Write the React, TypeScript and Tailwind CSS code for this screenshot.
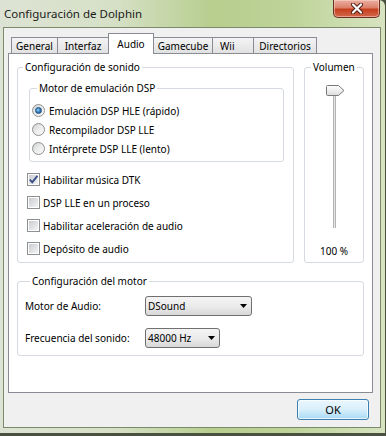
import type { ReactNode } from "react";

const tabs = [
  { label: "General", w: "w-[47px]", active: false },
  { label: "Interfaz", w: "w-[52px]", active: false },
  { label: "Audio", w: "w-[46px]", active: true },
  { label: "Gamecube", w: "w-[60px]", active: false },
  { label: "Wii", w: "w-[42px]", active: false },
  { label: "Directorios", w: "w-[64px]", active: false },
];

function GroupBox({
  label,
  className = "",
  legendClass = "ml-[5px]",
  children,
}: {
  label: string;
  className?: string;
  legendClass?: string;
  children: ReactNode;
}) {
  return (
    <fieldset className={`rounded-[3px] border border-[#d5dae0] ${className}`}>
      <legend className={`px-[2px] leading-[14px] ${legendClass}`}>{label}</legend>
      {children}
    </fieldset>
  );
}

function Radio({ checked }: { checked?: boolean }) {
  return (
    <span className="flex h-[13px] w-[13px] shrink-0 items-center justify-center rounded-full border border-[#8e8f8f] bg-gradient-to-br from-[#d0d2d4] via-[#ececec] to-[#fbfbfb]">
      {checked && (
        <span className="h-[7px] w-[7px] rounded-full border border-[#1f4f85] bg-[radial-gradient(circle_at_40%_40%,#9fd8f7_0%,#3a85c4_45%,#123f73_100%)]" />
      )}
    </span>
  );
}

function Checkbox({ checked }: { checked?: boolean }) {
  return (
    <span className="flex h-[13px] w-[13px] shrink-0 items-center justify-center border border-[#8e8f8f] bg-white">
      <span className="relative flex h-[9px] w-[9px] items-center justify-center bg-gradient-to-br from-[#c9ccd1] to-[#f4f4f4]">
        {checked && (
          <svg width="11" height="11" viewBox="0 0 11 11" className="absolute">
            <path d="M1.8 5.6 L4.3 8.2 L9.4 1.8" fill="none" stroke="#3c5287" strokeWidth="1.9" />
          </svg>
        )}
      </span>
    </span>
  );
}

function Select({ value, width }: { value: string; width: string }) {
  return (
    <div
      className={`flex h-[20px] ${width} items-center justify-between rounded-[3px] border border-[#707070] bg-gradient-to-b from-[#f4f4f4] via-[#ebebeb] to-[#d8d8d8] pl-[2px] pr-[4px]`}
    >
      <span className="leading-[14px]">{value}</span>
      <svg width="7" height="4" viewBox="0 0 7 4">
        <path d="M0 0 H7 L3.5 4 Z" fill="#000" />
      </svg>
    </div>
  );
}

export default function App() {
  return (
    <div className="h-[436px] w-[386px] overflow-hidden bg-[#4a5140] font-['Noto_Sans','Open_Sans',sans-serif] text-[10px] leading-[14px] text-black">
      <div className="flex h-[433px] w-[385px] flex-col rounded-tr-[6px] bg-[linear-gradient(90deg,#dde3d4_0%,#d6e0c6_30%,#b7ce8f_55%,#bdd398_75%,#d7e3c0_100%)]">
        <div className="flex h-[27px] items-start justify-between pl-[4px]">
          <span className="mt-[6px] text-[11.5px] leading-[16px] text-[#1b1b1b]">
            Configuración de Dolphin
          </span>
          <div className="mr-[5px] flex h-[18px] w-[47px] items-center justify-center rounded-b-[5px] border border-t-0 border-[#6a3226] bg-[linear-gradient(180deg,#eab0a2_0%,#dd806b_45%,#c5401f_55%,#d4674c_100%)] shadow-[inset_0_0_0_1px_rgba(255,220,210,0.5)]">
            <svg width="12" height="11" viewBox="0 0 12 11">
              <path d="M2 1.5 L10 9.5 M10 1.5 L2 9.5" stroke="#4a1c12" strokeWidth="4" strokeLinecap="round" />
              <path d="M2 1.5 L10 9.5 M10 1.5 L2 9.5" stroke="#ffffff" strokeWidth="2.2" strokeLinecap="round" />
            </svg>
          </div>
        </div>

        <div className="ml-[3px] flex h-[401px] w-[378px] flex-col border border-[#7c8a6c] bg-[#f0f0f0] pt-[5px]">
          <div className="ml-[7px] flex h-[20px] items-end">
            {tabs.map((t, i) =>
              t.active ? (
                <div
                  key={t.label}
                  className={`relative z-10 -mb-px flex h-[21px] ${t.w} ${i > 0 ? "-ml-px" : ""} items-center justify-center border border-b-0 border-[#898c95] bg-white pb-[1px]`}
                >
                  {t.label}
                </div>
              ) : (
                <div
                  key={t.label}
                  className={`flex h-[16px] ${t.w} ${i > 0 ? "-ml-px" : ""} items-center ${t.label === "Wii" ? "justify-start pl-[7px]" : "justify-center"} border border-b-0 border-[#898c95] bg-gradient-to-b from-[#f4f4f4] to-[#e1e1e1]`}
                >
                  {t.label}
                </div>
              ),
            )}
          </div>

          <div className="ml-[4px] flex h-[340px] w-[365px] flex-col border border-[#898c95] bg-white px-[8px] pt-[6px]">
            <div className="flex gap-[10px]">
              <GroupBox label="Configuración de sonido" className="w-[277px] pb-[2px]">
                <GroupBox
                  label="Motor de emulación DSP"
                  className="mt-[7px] ml-[11px] mr-[9px] pt-[6px] pb-[3px] pl-[2px]"
                >
                  {[
                    { label: "Emulación DSP HLE (rápido)", checked: true },
                    { label: "Recompilador DSP LLE", checked: false },
                    { label: "Intérprete DSP LLE (lento)", checked: false },
                  ].map((r) => (
                    <div key={r.label} className="flex h-[19px] items-center gap-[4px]">
                      <Radio checked={r.checked} />
                      <span>{r.label}</span>
                    </div>
                  ))}
                </GroupBox>
                <div className="mt-[6px] pl-[9px]">
                  {[
                    { label: "Habilitar música DTK", checked: true },
                    { label: "DSP LLE en un proceso", checked: false },
                    { label: "Habilitar aceleración de audio", checked: false },
                    { label: "Depósito de audio", checked: false },
                  ].map((c) => (
                    <div key={c.label} className="flex h-[23px] items-center gap-[3px]">
                      <Checkbox checked={c.checked} />
                      <span>{c.label}</span>
                    </div>
                  ))}
                </div>
              </GroupBox>

              <GroupBox label="Volumen" className="w-[60px]" legendClass="ml-[6px]">
                <div className="flex flex-col items-center">
                  <div className="relative mt-[14px] h-[140px] w-[3px] border-l border-r border-[#b4b4b4] bg-[#e6e6e6]">
                    <svg
                      width="19"
                      height="11"
                      viewBox="0 0 19 11"
                      className="absolute -left-[8px] -top-[3px]"
                    >
                      <defs>
                        <linearGradient id="thumb" x1="0" y1="0" x2="0" y2="1">
                          <stop offset="0" stopColor="#ffffff" />
                          <stop offset="1" stopColor="#dcdcdc" />
                        </linearGradient>
                      </defs>
                      <path
                        d="M1.5 0.5 H12.5 L18 5.5 L12.5 10.5 H1.5 Q0.5 10.5 0.5 9.5 V1.5 Q0.5 0.5 1.5 0.5 Z"
                        fill="url(#thumb)"
                        stroke="#7a7a7a"
                      />
                    </svg>
                  </div>
                  <span className="mt-[16px]">100 %</span>
                </div>
              </GroupBox>
            </div>

            <GroupBox label="Configuración del motor" className="mt-[11px] pl-[7px] pb-[7px]">
              <div className="mt-[8px] flex items-center">
                <span className="w-[120px]">Motor de Audio:</span>
                <Select value="DSound" width="w-[107px]" />
              </div>
              <div className="mt-[12px] flex items-center">
                <span className="w-[120px]">Frecuencia del sonido:</span>
                <Select value="48000 Hz" width="w-[75px]" />
              </div>
            </GroupBox>
          </div>

          <div className="mt-[6px] mr-[11px] flex h-[21px] w-[72px] items-center justify-center self-end rounded-[3px] border border-[#3c7fb1] bg-gradient-to-b from-[#eaf6fd] via-[#d9f0fc] to-[#a7d9f5] text-[11px] shadow-[inset_0_0_0_1px_rgba(255,255,255,0.7)]">
            OK
          </div>
        </div>
      </div>
    </div>
  );
}
